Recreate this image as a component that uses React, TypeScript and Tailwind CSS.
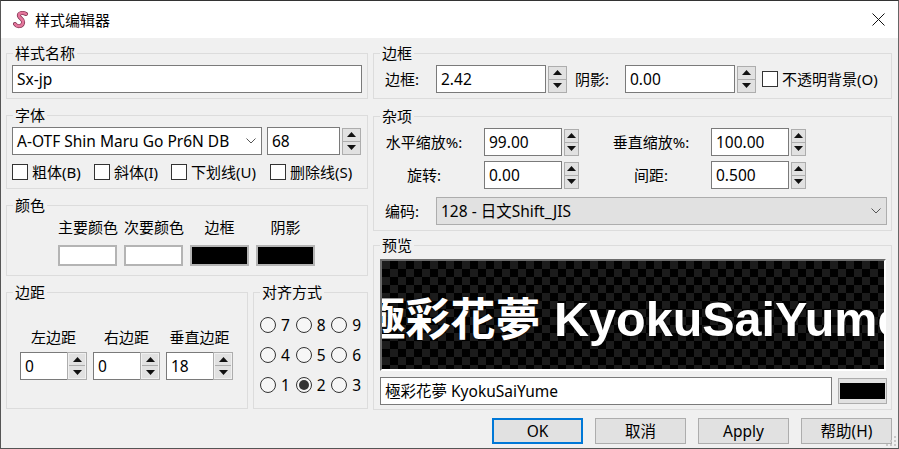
import React from "react"

const Arrow = ({ up }: { up?: boolean }) => (
  <svg width="9" height="5" viewBox="0 0 9 5" className="block">
    <path d={up ? "M4.5 0 L9 5 L0 5 Z" : "M0 0 L9 0 L4.5 5 Z"} fill="#111" />
  </svg>
)

const Spin = () => (
  <div className="flex w-[19px] h-[27px] flex-col">
    <div className="flex h-[14px] items-center justify-center border border-[#adadad] bg-[#e1e1e1]">
      <Arrow up />
    </div>
    <div className="-mt-px flex h-[14px] items-center justify-center border border-[#adadad] bg-[#e1e1e1]">
      <Arrow />
    </div>
  </div>
)

const Input = ({ value, className }: { value: string; className: string }) => (
  <div className={`flex h-[28px] items-center border border-[#7a7a7a] bg-white pl-1 text-[15.5px] ${className}`}>{value}</div>
)

const NumField = ({ value, w }: { value: string; w: string }) => (
  <div className="flex items-center gap-[2px]">
    <Input value={value} className={w} />
    <Spin />
  </div>
)

const SmallSpin = ({ value }: { value: string }) => (
  <div className="flex h-[28px] w-[67px]">
    <div className="flex w-[47px] items-center border border-r-0 border-[#7a7a7a] bg-white pl-1 text-[15.5px]">{value}</div>
    <div className="flex w-[20px] flex-col border border-[#adadad] bg-[#f0f0f0] p-px">
      <div className="flex h-[12px] items-center justify-center border-b border-[#adadad] bg-[#e1e1e1]">
        <Arrow up />
      </div>
      <div className="flex h-[12px] flex-1 items-center justify-center bg-[#e1e1e1]">
        <Arrow />
      </div>
    </div>
  </div>
)

const Check = ({ label, className }: { label: string; className?: string }) => (
  <div className={`flex items-center gap-1 ${className ?? ""}`}>
    <div className="h-4 w-4 border border-[#333] bg-white" />
    <span>{label}</span>
  </div>
)

const Group = ({
  title,
  className,
  inner,
  children,
}: {
  title: string
  className: string
  inner: string
  children: React.ReactNode
}) => (
  <fieldset className={`min-w-0 border border-[#dcdcdc] ${className}`}>
    <legend className="ml-[6px] px-[2px] leading-[20px]">{title}</legend>
    <div className={inner}>{children}</div>
  </fieldset>
)

const Swatch = ({ dark }: { dark?: boolean }) => (
  <div className={`h-[21px] w-[59px] border-2 border-[#b4b4b4] ${dark ? "bg-black" : "bg-white"}`} />
)

const Radio = ({ n, on }: { n: number; on?: boolean }) => (
  <div className="flex w-[36px] items-center gap-[5px] text-[15.5px]">
    <div className="flex h-4 w-4 items-center justify-center rounded-full border border-[#333] bg-[#f6f6f6]">
      {on && <div className="h-[10px] w-[10px] rounded-full bg-[#333]" />}
    </div>
    <span>{n}</span>
  </div>
)

const Chevron = () => (
  <svg width="10" height="6" viewBox="0 0 10 6" className="block">
    <path d="M0.5 0.5 L5 5 L9.5 0.5" fill="none" stroke="#555" strokeWidth="1" />
  </svg>
)

const Btn = ({ label, primary }: { label: string; primary?: boolean }) => (
  <div
    className={`flex h-[26px] w-[91px] items-center justify-center bg-[#e1e1e1] text-[15.5px] ${
      primary ? "border-2 border-[#0078d7]" : "border border-[#adadad]"
    }`}
  >
    {label}
  </div>
)

export default function App() {
  return (
    <div className="relative flex h-[449px] w-[899px] flex-col border border-t-[#333] border-r-[#666] border-b-[#555] border-l-[#555] bg-[#f0f0f0] text-[15px] leading-[20px] text-black font-['Noto_Sans','Noto_Sans_CJK_SC',sans-serif]">
      <div className="flex h-[37px] items-center justify-between bg-white">
        <div className="flex items-center">
          <svg width="16" height="18" viewBox="0 0 16 18" className="ml-[12px]">
            <path
              d="M13 3 C10 1 5 2 6 5 C7 8 11 8 10 12 C9 16 4 16 2 13"
              fill="none"
              stroke="#7d3350"
              strokeWidth="4"
              strokeLinecap="round"
            />
            <path
              d="M13 3 C10 1 5 2 6 5 C7 8 11 8 10 12 C9 16 4 16 2 13"
              fill="none"
              stroke="#e4769c"
              strokeWidth="2.6"
              strokeLinecap="round"
            />
          </svg>
          <span className="ml-[6px]">样式编辑器</span>
        </div>
        <svg width="13" height="13" viewBox="0 0 13 13" className="mr-[13px]">
          <path d="M0.5 0.5 L12.5 12.5 M12.5 0.5 L0.5 12.5" stroke="#111" strokeWidth="1" />
        </svg>
      </div>

      <div className="flex flex-1 gap-[5px] pl-[5px] pt-[5px]">
        <div className="flex w-[362px] flex-col">
          <Group title="样式名称" className="h-[56px]" inner="px-[5px]">
            <Input value="Sx-jp" className="mt-[2px] w-[350px]" />
          </Group>

          <Group title="字体" className="mt-[6px] h-[84px]" inner="px-[5px]">
            <div className="mt-[2px] flex items-center">
              <div className="flex h-[28px] w-[250px] items-center justify-between border border-[#7a7a7a] bg-white pl-1 pr-[5px] text-[15.5px]">
                <span>A-OTF Shin Maru Go Pr6N DB</span>
                <Chevron />
              </div>
              <Input value="68" className="ml-[5px] w-[73px]" />
              <div className="ml-[2px]">
                <Spin />
              </div>
            </div>
            <div className="mt-[7px] flex">
              <Check label="粗体(B)" className="w-[82px]" />
              <Check label="斜体(I)" className="w-[77px]" />
              <Check label="下划线(U)" className="w-[99px]" />
              <Check label="删除线(S)" />
            </div>
          </Group>

          <Group title="颜色" className="mt-[6px] h-[81px]" inner="pl-[51px]">
            <div className="mt-[2px] flex w-[260px] gap-[7px]">
              {["主要颜色", "次要颜色", "边框", "阴影"].map((t) => (
                <div key={t} className="w-[59px] whitespace-nowrap text-center">
                  {t}
                </div>
              ))}
            </div>
            <div className="mt-[8px] flex gap-[7px]">
              <Swatch />
              <Swatch />
              <Swatch dark />
              <Swatch dark />
            </div>
          </Group>

          <div className="mt-[6px] flex gap-[5px]">
            <Group title="边距" className="h-[127px] w-[242px]" inner="px-[13px]">
              <div className="mt-[25px] flex gap-[6px]">
                {["左边距", "右边距", "垂直边距"].map((t) => (
                  <div key={t} className="w-[67px] whitespace-nowrap text-center">
                    {t}
                  </div>
                ))}
              </div>
              <div className="mt-[5px] flex gap-[6px]">
                <SmallSpin value="0" />
                <SmallSpin value="0" />
                <SmallSpin value="18" />
              </div>
            </Group>
            <Group title="对齐方式" className="h-[127px] w-[115px]" inner="pl-[6px]">
              <div className="mt-[13px] flex flex-col gap-[10px]">
                <div className="flex">
                  <Radio n={7} />
                  <Radio n={8} />
                  <Radio n={9} />
                </div>
                <div className="flex">
                  <Radio n={4} />
                  <Radio n={5} />
                  <Radio n={6} />
                </div>
                <div className="flex">
                  <Radio n={1} />
                  <Radio n={2} on />
                  <Radio n={3} />
                </div>
              </div>
            </Group>
          </div>
        </div>

        <div className="flex w-[519px] flex-col">
          <Group title="边框" className="h-[56px]" inner="pl-[11px]">
            <div className="mt-[2px] flex items-center">
              <span className="w-[51px]">边框:</span>
              <NumField value="2.42" w="w-[110px]" />
              <span className="ml-[8px] w-[50px]">阴影:</span>
              <NumField value="0.00" w="w-[110px]" />
              <Check label="不透明背景(O)" className="ml-[6px] whitespace-nowrap" />
            </div>
          </Group>

          <Group title="杂项" className="mt-[7px] h-[125px]" inner="pl-[11px]">
            <div className="mt-[2px] grid grid-cols-[78px_116px_111px_116px] items-center gap-y-[5px]">
              <span className="whitespace-nowrap text-center">水平缩放%:</span>
              <div className="ml-[21px]"><NumField value="99.00" w="w-[95px]" /></div>
              <span className="ml-[33px] whitespace-nowrap text-center">垂直缩放%:</span>
              <div className="ml-[21px]"><NumField value="100.00" w="w-[95px]" /></div>
              <span className="text-center">旋转:</span>
              <div className="ml-[21px]"><NumField value="0.00" w="w-[95px]" /></div>
              <span className="ml-[33px] text-center">间距:</span>
              <div className="ml-[21px]"><NumField value="0.500" w="w-[95px]" /></div>
            </div>
            <div className="mt-[8px] flex items-center">
              <span className="w-[51px]">编码:</span>
              <div className="flex h-[28px] w-[451px] items-center justify-between border border-[#adadad] bg-[#e1e1e1] pl-1 pr-[5px] text-[15.5px]">
                <span>128 - 日文Shift_JIS</span>
                <Chevron />
              </div>
            </div>
          </Group>

          <Group title="预览" className="mt-[4px] h-[175px]" inner="pl-[6px]">
            <div className="mt-[4px] flex h-[112px] w-[506px] items-center justify-center overflow-hidden border-2 border-t-[#6b6b6b] border-r-white border-b-white border-l-[#6b6b6b] bg-[repeating-conic-gradient(#000_0_25%,#1c1c1c_0_50%)] bg-[length:16px_16px]">
              <span className="-ml-[1px] mt-[8px] whitespace-nowrap font-bold leading-none text-white [text-shadow:0_0_3px_#000] [word-spacing:1px] font-['Liberation_Sans','Noto_Sans_CJK_JP',sans-serif]">
                <span className="text-[45px]">極彩花夢 </span>
                <span className="text-[48.5px]">KyokuSaiYume</span>
              </span>
            </div>
            <div className="mt-[6px] flex items-center">
              <Input value="極彩花夢 KyokuSaiYume" className="w-[452px] font-['Noto_Sans','Noto_Sans_CJK_JP',sans-serif]" />
              <div className="ml-[6px] flex h-[26px] w-[49px] items-center justify-center border border-[#adadad] bg-[#e1e1e1]">
                <div className="h-4 w-[45px] bg-black" />
              </div>
            </div>
          </Group>

          <div className="mt-[8px] flex justify-end gap-[12px]">
            <Btn label="OK" primary />
            <Btn label="取消" />
            <Btn label="Apply" />
            <Btn label="帮助(H)" />
          </div>
        </div>
      </div>

      <svg width="11" height="11" viewBox="0 0 11 11" className="absolute bottom-[1px] right-[1px]">
        <path d="M8 0h2v2H8zM4 4h2v2H4zM8 4h2v2H8zM0 8h2v2H0zM4 8h2v2H4zM8 8h2v2H8z" fill="#c8c8c8" />
      </svg>
    </div>
  )
}
